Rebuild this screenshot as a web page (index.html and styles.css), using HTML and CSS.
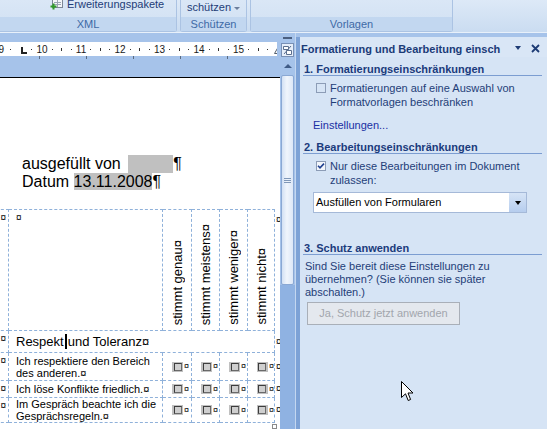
FILE: index.html
```html
<!DOCTYPE html>
<html lang="de">
<head>
<meta charset="utf-8">
<title>Formatierung und Bearbeitung einschränken</title>
<link rel="stylesheet" href="styles.css">
</head>
<body>
<div class="app">
  <header class="ribbon">
    <div class="grp grp-xml">
      <div class="grp-body body-xml">
        <svg class="addin" width="13" height="11" viewBox="0 0 13 11">
          <rect x="2.5" y="0.5" width="10" height="8" fill="#f4f6f9" stroke="#7c8796"/>
          <path d="M4 3.5h7M4 5.5h7M7.5 1v7" stroke="#9aa5b4" stroke-width="1"/>
          <path d="M0.5 7.5h6M3.5 4.5v6" stroke="#2f9a2a" stroke-width="2"/>
        </svg>
        <span class="rb-text">Erweiterungspakete</span>
      </div>
      <div class="grp-label">XML</div>
    </div>
    <div class="grp grp-protect">
      <div class="grp-body body-protect"><span class="rb-text">schützen</span><span class="rb-caret"></span></div>
      <div class="grp-label">Schützen</div>
    </div>
    <div class="grp grp-tpl">
      <div class="grp-body"></div>
      <div class="grp-label">Vorlagen</div>
    </div>
    <div class="ribbon-rest"></div>
  </header>

  <main class="main">
    <section class="doccol">
      <div class="ruler">
        <div class="rseg first"><span class="num">9</span><span class="dot"></span><span class="tabslot"><i class="tabmark"></i></span><span class="dot"></span></div>
        <div class="rseg"><span class="num">10</span><span class="dot"></span><span class="tk"></span><span class="dot"></span></div>
        <div class="rseg"><span class="num">11</span><span class="dot"></span><span class="tk"></span><span class="dot"></span></div>
        <div class="rseg"><span class="num">12</span><span class="dot"></span><span class="tk"></span><span class="dot"></span></div>
        <div class="rseg"><span class="num">13</span><span class="dot"></span><span class="tk"></span><span class="dot"></span></div>
        <div class="rseg"><span class="num">14</span><span class="dot"></span><span class="tk"></span><span class="dot"></span></div>
        <div class="rseg"><span class="num">15</span><span class="dot"></span><span class="tk"></span><span class="dot"></span></div>
        <svg class="indent" width="9" height="9" viewBox="0 0 9 9"><path d="M0.5 8.5L4.5 1.5L8.5 8.5Z" fill="#fff" stroke="#55606e"/></svg>
      </div>
      <div class="rband"><i></i><i></i><i></i><i></i><i></i></div>
      <div class="page">
        <p class="fline">ausgefüllt von <span class="blank"></span>¶</p>
        <p class="fline">Datum <span class="fld">13.11.2008</span>¶</p>
        <table class="tbl">
          <colgroup>
            <col class="c-l"><col class="c-t"><col class="c-1"><col class="c-2"><col class="c-3"><col class="c-4"><col class="c-e">
          </colgroup>
          <tr class="r-head">
            <td class="lc">¤</td>
            <td class="tx top">¤</td>
            <td class="vh"><div class="vt">stimmt genau¤</div></td>
            <td class="vh"><div class="vt">stimmt meistens¤</div></td>
            <td class="vh"><div class="vt">stimmt weniger¤</div></td>
            <td class="vh"><div class="vt">stimmt nicht¤</div></td>
            <td class="end top">¤</td>
          </tr>
          <tr class="r-topic">
            <td class="lc">¤</td>
            <td class="topic" colspan="5">Respekt<span class="tcur"></span>und Toleranz¤</td>
            <td class="end">¤</td>
          </tr>
          <tr class="r-3">
            <td class="lc">¤</td>
            <td class="tx">Ich respektiere den Bereich<br>des anderen.¤</td>
            <td class="cb"><div class="cbw"><span class="ff"><i></i></span><span class="cm">¤</span></div></td>
            <td class="cb"><div class="cbw"><span class="ff"><i></i></span><span class="cm">¤</span></div></td>
            <td class="cb"><div class="cbw"><span class="ff"><i></i></span><span class="cm">¤</span></div></td>
            <td class="cb"><div class="cbw"><span class="ff"><i></i></span><span class="cm">¤</span></div></td>
            <td class="end">¤</td>
          </tr>
          <tr class="r-4">
            <td class="lc">¤</td>
            <td class="tx">Ich löse Konflikte friedlich.¤</td>
            <td class="cb"><div class="cbw"><span class="ff"><i></i></span><span class="cm">¤</span></div></td>
            <td class="cb"><div class="cbw"><span class="ff"><i></i></span><span class="cm">¤</span></div></td>
            <td class="cb"><div class="cbw"><span class="ff"><i></i></span><span class="cm">¤</span></div></td>
            <td class="cb"><div class="cbw"><span class="ff"><i></i></span><span class="cm">¤</span></div></td>
            <td class="end">¤</td>
          </tr>
          <tr class="r-5">
            <td class="lc">¤</td>
            <td class="tx">Im Gespräch beachte ich die<br>Gesprächsregeln.¤</td>
            <td class="cb"><div class="cbw"><span class="ff"><i></i></span><span class="cm">¤</span></div></td>
            <td class="cb"><div class="cbw"><span class="ff"><i></i></span><span class="cm">¤</span></div></td>
            <td class="cb"><div class="cbw"><span class="ff"><i></i></span><span class="cm">¤</span></div></td>
            <td class="cb"><div class="cbw"><span class="ff"><i></i></span><span class="cm">¤</span></div></td>
            <td class="end">¤</td>
          </tr>
        </table>
        <div class="resize"></div>
      </div>
    </section>

    <div class="vscroll">
      <div class="split"></div>
      <div class="rtoggle">
        <svg width="11" height="12" viewBox="0 0 11 12"><path d="M1.5 2.5h5v3h-5zM4.5 6.5h5v4h-5z" fill="#fff" stroke="#5b6f8f"/><path d="M2 10l7-8" stroke="#5b6f8f"/></svg>
      </div>
      <div class="sb-up"><i></i></div>
      <div class="sb-thumb"><i class="grip"></i></div>
      <div class="sb-track"></div>
    </div>

    <aside class="pane">
      <div class="pane-head">
        <span class="pane-title">Formatierung und Bearbeitung einsch</span>
        <span class="pane-menu"></span>
        <svg class="pane-close" width="9" height="9" viewBox="0 0 9 9"><path d="M1 1L8 8M8 1L1 8" stroke="#1d3b75" stroke-width="1.8"/></svg>
      </div>

      <section class="sec sec-1">
        <h2 class="sec-head">1. Formatierungseinschränkungen</h2>
        <div class="chk-row"><span class="chk"></span><span class="chk-text">Formatierungen auf eine Auswahl von<br>Formatvorlagen beschränken</span></div>
        <a class="link">Einstellungen...</a>
      </section>

      <section class="sec sec-2">
        <h2 class="sec-head">2. Bearbeitungseinschränkungen</h2>
        <div class="chk-row"><span class="chk checked"><svg width="8" height="8" viewBox="0 0 8 8"><path d="M1 3.8L3 5.8L7 1.6" fill="none" stroke="#20408f" stroke-width="1.6"/></svg></span><span class="chk-text">Nur diese Bearbeitungen im Dokument<br>zulassen:</span></div>
        <div class="dd"><span class="dd-text">Ausfüllen von Formularen</span><span class="dd-btn"><i></i></span></div>
      </section>

      <section class="sec sec-3">
        <h2 class="sec-head">3. Schutz anwenden</h2>
        <p class="sec-text">Sind Sie bereit diese Einstellungen zu<br>übernehmen? (Sie können sie später<br>abschalten.)</p>
        <div class="btn">Ja, Schutz jetzt anwenden</div>
      </section>
    </aside>
  </main>

  <svg class="pointer" width="13" height="21" viewBox="0 0 13 21"><path d="M0.5 0.5V16.5L4.5 12.8L7.2 19.5L9.6 18.5L7 12H12Z" fill="#fff" stroke="#000" stroke-linejoin="miter"/></svg>
</div>
</body>
</html>
```

FILE: styles.css
```css
* { box-sizing: border-box; }
html, body { margin: 0; padding: 0; }
body {
  width: 547px;
  height: 429px;
  overflow: hidden;
  font-family: "Liberation Sans", Arial, sans-serif;
  background: #a6c3ea;
}
.app { position: relative; width: 547px; height: 429px; overflow: hidden; }

/* ---------- ribbon ---------- */
.ribbon {
  display: flex;
  height: 33px;
  background: linear-gradient(#dde9f7, #cadcf1);
  border-bottom: 1px solid #e8f0fa;
}
.grp {
  display: flex;
  flex-direction: column;
  height: 32px;
  margin-right: 3px;
  border: 1px solid #abc3e3;
  border-top: none;
  border-radius: 0 0 3px 3px;
  background: linear-gradient(#dae7f6, #d0e0f3);
}
.grp-xml { width: 177px; border-left: none; border-radius: 0 0 3px 0; }
.grp-protect { width: 67px; }
.grp-tpl { width: 203px; }
.ribbon-rest { flex: 1; }
.grp-body { flex: 1; display: flex; align-items: flex-start; overflow: hidden; }
.body-xml { padding-left: 50px; }
.body-xml .addin { margin-top: -1px; }
.body-xml .rb-text { margin-top: -2px; margin-left: 4px; }
.body-protect { padding: 1px 0 0 6px; }
.rb-text { font-size: 11px; line-height: 13px; color: #1e3d78; white-space: nowrap; }
.rb-caret {
  width: 0; height: 0;
  margin: 6px 0 0 3px;
  border-top: 3px solid #6b7e9c;
  border-left: 3px solid transparent;
  border-right: 3px solid transparent;
}
.grp-label {
  height: 14px;
  line-height: 14px;
  font-size: 11px;
  color: #3e6aa6;
  text-align: center;
  background: #c2d7f0;
}

/* ---------- main ---------- */
.main { display: flex; height: 396px; background: #a6c3ea; }
.doccol { width: 280px; padding-top: 9px; display: flex; flex-direction: column; }

.ruler {
  height: 14px;
  width: 277px;
  background: #fff;
  display: flex;
  align-items: center;
  overflow: hidden;
  font-size: 10px;
  color: #1a1a1a;
}
.rseg { flex: 0 0 37.8px; display: flex; height: 14px; }
.rseg.first { margin-left: -3.4px; }
.rseg > span { flex: 0 0 9.45px; display: flex; justify-content: center; align-items: center; height: 14px; }
.rseg .dot::before { content: ""; width: 1px; height: 1px; background: #333; }
.rseg .tk::before { content: ""; width: 1px; height: 3px; background: #333; }
.rseg .tabslot { justify-content: flex-start; align-items: flex-end; }
.tabmark {
  display: block;
  width: 6px; height: 7px;
  margin: 0 0 2px 5.5px;
  border-left: 2px solid #222;
  border-bottom: 2px solid #222;
}
.indent { margin-left: 2px; flex: 0 0 9px; }

.rband { height: 21px; display: flex; align-items: flex-start; gap: 46px; padding-left: 39px; }
.rband i { width: 1px; height: 3px; background: #5a6a80; }

.page {
  flex: 1;
  background: #fff;
  border-top: 1px solid #000;
  overflow: hidden;
  padding-top: 77px;
}
.fline {
  margin: 0;
  padding-left: 22px;
  font-size: 16px;
  line-height: 18px;
  color: #000;
  white-space: nowrap;
}
.blank {
  display: inline-block;
  width: 45px;
  height: 18px;
  margin-left: 3px;
  vertical-align: top;
  background: #c0c0c0;
}
.fld { background: #c0c0c0; }

/* table */
.tbl {
  margin: 18px 0 0 -30px;
  border-collapse: collapse;
  table-layout: fixed;
  width: 324px;
  color: #000;
}
.c-l { width: 38px; }
.c-t { width: 154px; }
.c-1 { width: 29px; }
.c-2 { width: 28px; }
.c-3 { width: 28px; }
.c-4 { width: 27px; }
.c-e { width: 20px; }
.tbl td { border: 1px dashed #8fb1da; padding: 0; font-size: 11px; line-height: 12px; vertical-align: middle; }
.tbl td.end { border: none; font-size: 10px; padding-left: 1px; }
.tbl td.top { vertical-align: top; }
.r-head { height: 121px; }
.r-topic { height: 22px; }
.r-3 { height: 28px; }
.r-4 { height: 17px; }
.r-5 { height: 25px; }
.lc { text-align: right; vertical-align: top !important; padding: 2px 2px 0 0 !important; font-size: 10px !important; }
.r-head .end { padding-top: 4px !important; }
.tx { padding: 0 4px 0 7px !important; white-space: nowrap; }
.tx.top { padding: 2px 0 0 7px !important; font-size: 10px !important; }
.vh { vertical-align: bottom !important; padding-bottom: 5px !important; }
.vt {
  display: block;
  margin: 0 auto;
  writing-mode: vertical-rl;
  transform: rotate(180deg);
  font-size: 13px;
  line-height: 15px;
  white-space: nowrap;
}
.topic { font-size: 13px !important; line-height: 15px !important; padding-left: 7px !important; white-space: nowrap; }
.tcur {
  display: inline-block;
  width: 2px;
  height: 15px;
  margin: 0 1px 0 1px;
  background: #000;
  vertical-align: -3px;
}
.cb { padding-left: 9px !important; }
.cbw { display: flex; align-items: center; gap: 1px; }
.ff {
  display: flex;
  align-items: center;
  justify-content: center;
  width: 11px;
  height: 10px;
  background: #c0c0c0;
}
.ff i {
  display: block;
  width: 8px;
  height: 8px;
  border: 1px solid #3c3c3c;
  border-right-color: #6a6a6a;
  border-bottom-color: #6a6a6a;
  background: #cfcfcf;
}
.cm { font-size: 9px; line-height: 9px; }
.resize { width: 5px; height: 5px; margin: 1px 0 0 272px; border: 1px solid #8a8a8a; background: #fff; }

/* vertical scrollbar */
.vscroll {
  width: 16px;
  display: flex;
  flex-direction: column;
  border-right: 1px solid #c4d7f0;
}
.split { height: 2px; margin: 4px 3px 4px 3px; background: #4b5f80; }
.rtoggle {
  height: 14px;
  width: 13px;
  margin-left: 1px;
  border: 1px solid #7890b6;
  background: #e6eef9;
  display: flex;
  align-items: center;
  justify-content: center;
}
.sb-up { height: 18px; display: flex; justify-content: center; align-items: center; }
.sb-up i {
  width: 0; height: 0;
  border-bottom: 4px solid #3f5b86;
  border-left: 4px solid transparent;
  border-right: 4px solid transparent;
}
.sb-thumb {
  height: 210px;
  margin: 0 1px 0 1px;
  border: 1px solid #8aa8d4;
  border-radius: 2px;
  background: linear-gradient(90deg, #d3e1f4, #f0f5fc 45%, #dce7f7);
  display: flex;
  align-items: center;
  justify-content: center;
}
.grip { display: block; width: 7px; height: 5px; background: repeating-linear-gradient(#7f97b8 0 1px, transparent 1px 2px); }
.sb-track { flex: 1; background: #8fb2e2; }

/* ---------- task pane ---------- */
.pane {
  width: 251px;
  margin-top: 4px;
  background: #d6e4f5;
  border-left: 4px solid #7da2d6;
  color: #1f3e78;
  font-size: 11px;
}
.pane-head {
  height: 20px;
  display: flex;
  align-items: center;
  padding: 4px 7px 0 1px;
  background: #d9e6f6;
}
.pane-title {
  flex: 1;
  font-weight: bold;
  line-height: 13px;
  white-space: nowrap;
  overflow: hidden;
  color: #1b3b78;
}
.pane-menu {
  width: 0; height: 0;
  margin-top: -2px;
  border-top: 4px solid #1d3b75;
  border-left: 3.5px solid transparent;
  border-right: 3.5px solid transparent;
}
.pane-close { margin-left: 10px; margin-top: -2px; }

.sec-head {
  margin: 0 5px 0 3px;
  padding-left: 1px;
  font-size: 11px;
  font-weight: bold;
  line-height: 12px;
  color: #1b3b7c;
  border-bottom: 1px solid #7c9dd1;
}
.sec-1 .sec-head { margin-top: 6px; }
.sec-2 .sec-head { margin-top: 9px; }
.sec-3 .sec-head { margin-top: 29px; }

.chk-row { display: flex; gap: 4px; margin-top: 5px; padding-left: 16px; line-height: 14px; }
.chk {
  flex: 0 0 10px;
  height: 10px;
  margin-top: 2px;
  border: 1px solid #8c9cb6;
}
.chk.checked { background: #f3f6fb; display: flex; align-items: center; justify-content: center; }
.chk-text { white-space: nowrap; }
.link { display: block; margin: 9px 0 0 13px; line-height: 14px; color: #1a2fa3; }

.dd {
  display: flex;
  margin: 5px 0 0 13px;
  width: 214px;
  height: 21px;
  border: 1px solid #a5b9d8;
  background: #fff;
}
.dd-text { flex: 1; padding-left: 2px; line-height: 19px; color: #000; }
.dd-btn {
  width: 17px;
  background: linear-gradient(#d6e4f6, #b6cdee);
  display: flex;
  align-items: center;
  justify-content: center;
}
.dd-btn i {
  width: 0; height: 0;
  border-top: 4px solid #000;
  border-left: 3.5px solid transparent;
  border-right: 3.5px solid transparent;
}
.sec-text { margin: 5px 0 0 0; padding-left: 5px; line-height: 13px; white-space: nowrap; }
.btn {
  margin: 3px 0 0 7px;
  width: 153px;
  height: 23px;
  border: 1px solid #a9afb8;
  background: #e4e8ee;
  color: #a2a6ad;
  text-align: center;
  line-height: 21px;
}

.pointer { position: absolute; left: 401px; top: 381px; }
```
